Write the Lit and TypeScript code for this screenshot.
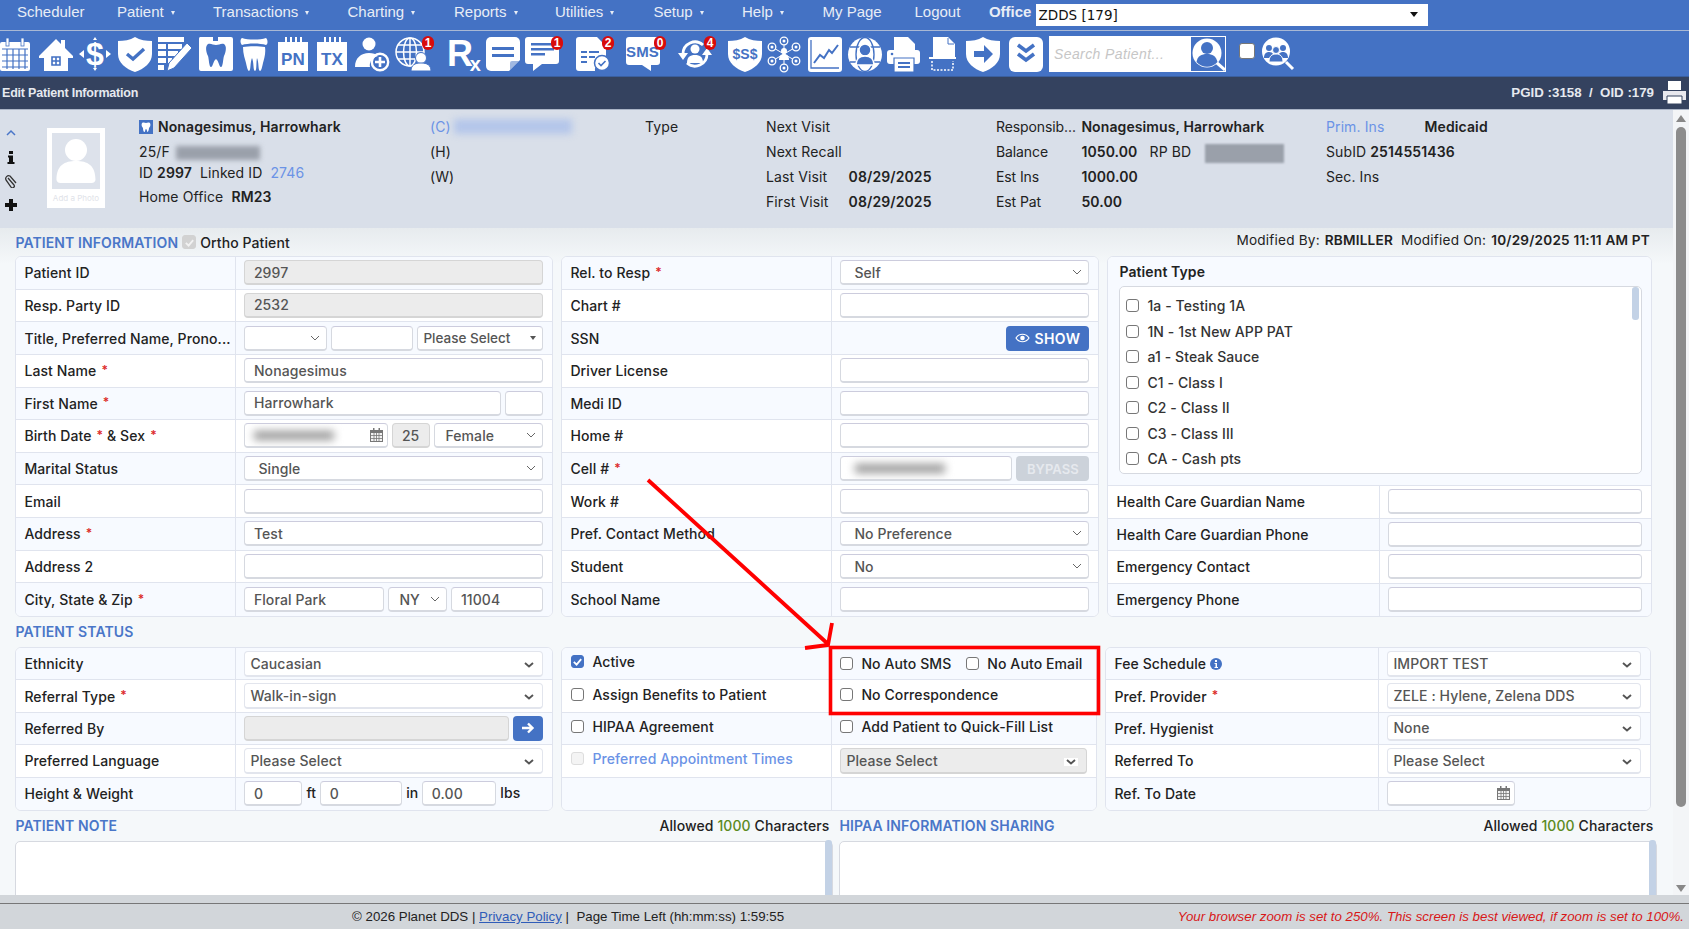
import { LitElement, html, css, svg } from "lit";
import { customElement } from "lit/decorators.js";

const B = "#4472c4";
const icons: Record<string, any> = {
  calendar: svg`<rect x="0" y="5" width="30" height="29" rx="2" fill="#fff"/><rect x="6" y="1" width="3" height="8" fill="#fff" stroke="${B}" stroke-width=".8"/><rect x="21" y="1" width="3" height="8" fill="#fff" stroke="${B}" stroke-width=".8"/><path d="M2 12h26M2 18h26M2 24h26M2 30h26M7 12v20M13 12v20M19 12v20M25 12v20" stroke="${B}" stroke-width="1.2"/>`,
  home: svg`<path d="M0 19 L17 2 L22 7 V3 H26 V11 L34 19 L34 21 H29 V34 H5 V21 H0Z" fill="#fff"/><path d="M13 20h8v8h-8z M17 20v8 M13 24h8" fill="none" stroke="${B}" stroke-width="1.6"/>`,
  dollar: svg`<text x="16" y="28" text-anchor="middle" font-family="Liberation Sans" font-weight="700" font-size="32" fill="#fff">$</text><path d="M0 17l5-4v8zM32 17l-5-4v8zM16 0l-2 3h4zM16 34l-2-3h4z" fill="#fff"/>`,
  shield: svg`<path d="M17 0C22 3 28 4 34 4V17C34 26 26 32 17 35C8 32 0 26 0 17V4C6 4 12 3 17 0Z" fill="#fff"/><path d="M9 17l6 5 11-10" fill="none" stroke="${B}" stroke-width="3.4"/>`,
  edit: svg`<path d="M0 0h26v5H0zM0 7h8v5H0zM10 7h14v5H10zM0 14h8v5H0zM10 14h10v5H10zM0 21h8v5H0zM10 21h4v5h-4zM0 28h6v5H0z" fill="#fff"/><path d="M29 6l5 5-18 20-7 3 2-8z" fill="#fff" stroke="${B}" stroke-width="1"/>`,
  toothbox: svg`<path d="M1 0h13v4h5V0h13a2 2 0 012 2v30a2 2 0 01-2 2H2a2 2 0 01-2-2V2a2 2 0 011-2z" fill="#fff"/><path d="M9 7c3-1 5 1 8 1s5-2 8-1c3 2 2 8 0 12-1 3-1 11-3 11s-2-6-5-8c-3 2-3 8-5 8s-2-8-3-11c-2-4-3-10 0-12z" fill="${B}"/>`,
  teeth: svg`<path d="M1 1c6 2 18 2 24 0 2 2 2 6 0 7-6-2-18-2-24 0-2-2-2-6 0-7z" fill="#fff"/><path d="M2 10c6-1 16-1 22 0 1 7-1 12-2 16-1 5-2 8-3 8-2 0-1-9-3-13-1 4 0 13-2 13s-1-9-3-13c-2 4-1 13-3 13-1 0-2-3-3-8-1-4-3-9-3-16z" fill="#fff"/>`,
  pn: svg`<path d="M0 5h7V0h2v5h3V0h2v5h3V0h2v5h3V0h2v5h6v29H0z" fill="#fff"/><text x="15" y="28" text-anchor="middle" font-family="Liberation Sans" font-weight="700" font-size="17" fill="${B}">PN</text>`,
  tx: svg`<path d="M0 5h7V0h2v5h3V0h2v5h3V0h2v5h3V0h2v5h6v29H0z" fill="#fff"/><text x="15" y="28" text-anchor="middle" font-family="Liberation Sans" font-weight="700" font-size="17" fill="${B}">TX</text>`,
  adduser: svg`<circle cx="14" cy="7" r="6.5" fill="#fff"/><path d="M0 30c0-9 6-14 14-14 4 0 7 1 9 3-6 2-9 6-8 11z" fill="#fff"/><circle cx="25" cy="25" r="8.2" fill="none" stroke="#fff" stroke-width="2.4"/><path d="M25 20v10M20 25h10" stroke="#fff" stroke-width="2.6"/>`,
  globeuser: svg`<g fill="none" stroke="#fff" stroke-width="1.5"><circle cx="15" cy="15" r="14"/><ellipse cx="15" cy="15" rx="6.5" ry="14"/><path d="M1 15h28M3 8h24M3 22h24M15 1v28"/></g><circle cx="26" cy="21" r="5.5" fill="#fff" stroke="${B}"/><path d="M16 34c0-6 4-8 10-8s10 2 10 8z" fill="#fff" stroke="${B}"/>`,
  rx: svg`<text x="0" y="29" font-family="Liberation Sans" font-weight="700" font-size="36" fill="#fff" textLength="34" lengthAdjust="spacing">R<tspan dy="5" font-size="20">x</tspan></text>`,
  note: svg`<path d="M5 0h24a5 5 0 015 5v18L23 34H5a5 5 0 01-5-5V5a5 5 0 015-5z" fill="#fff"/><path d="M6 10h22v3H6zM6 17h22v3H6z" fill="${B}"/><path d="M24 33V26a2 2 0 012-2h7z" fill="${B}" opacity=".5"/>`,
  chat: svg`<path d="M3 0h28a3 3 0 013 3v21a3 3 0 01-3 3H17L8 34v-7H3a3 3 0 01-3-3V3a3 3 0 013-3z" fill="#fff"/><path d="M6 6h23v2.5H6zM6 11h23v2.5H6zM6 16h14v2.5H6z" fill="${B}"/>`,
  list: svg`<path d="M3 0h18l9 9v12a12 12 0 00-11 13H3a3 3 0 01-3-3V3a3 3 0 013-3z" fill="#fff"/><path d="M5 14h6v2H5zM13 14h10v2H13zM5 19h6v2H5zM13 19h6v2h-6zM5 24h6v2H5z" fill="${B}"/><circle cx="26" cy="26" r="7.5" fill="#fff" stroke="${B}" stroke-width="1.5"/><path d="M22.5 26l2.5 2.5 4.5-4.5" stroke="${B}" stroke-width="1.6" fill="none"/>`,
  sms: svg`<path d="M3 0h28a3 3 0 013 3v22a3 3 0 01-3 3h-6v6l-9-6H3a3 3 0 01-3-3V3a3 3 0 013-3z" fill="#fff"/><text x="16.5" y="20" text-anchor="middle" font-family="Liberation Sans" font-weight="700" font-size="15" fill="${B}">SMS</text>`,
  refresh: svg`<path d="M5 17a12 12 0 0120-9" fill="none" stroke="#fff" stroke-width="2.8"/><path d="M29 17a12 12 0 01-20 9" fill="none" stroke="#fff" stroke-width="2.8"/><path d="M0 16h10l-5 7zM24 18h10l-5-7z" fill="#fff"/><circle cx="17" cy="12" r="4.5" fill="#fff"/><path d="M9 26c0-6 3-8 8-8s8 2 8 8z" fill="#fff"/>`,
  shieldmoney: svg`<path d="M17 0C22 3 28 4 34 4V17C34 26 26 32 17 35C8 32 0 26 0 17V4C6 4 12 3 17 0Z" fill="#fff"/><text x="17" y="22" text-anchor="middle" font-family="Liberation Sans" font-weight="700" font-size="14" fill="${B}">$S$</text>`,
  network: svg`<g stroke="#fff" stroke-width="1" fill="none"><path d="M16 17L16 4M16 17L16 31M16 17L4 10M16 17L28 10M16 17L4 24M16 17L28 24"/></g><g fill="${B}" stroke="#fff" stroke-width="1.3"><circle cx="16" cy="4" r="3.8"/><circle cx="4" cy="10" r="3.8"/><circle cx="28" cy="10" r="3.8"/><circle cx="4" cy="24" r="3.8"/><circle cx="28" cy="24" r="3.8"/><circle cx="16" cy="31" r="3.8"/></g><circle cx="16" cy="14" r="3" fill="#fff"/><path d="M11 23c0-4 2-6 5-6s5 2 5 6z" fill="#fff"/><g fill="#fff"><circle cx="16" cy="4" r="1.5"/><circle cx="4" cy="10" r="1.5"/><circle cx="28" cy="10" r="1.5"/><circle cx="4" cy="24" r="1.5"/><circle cx="28" cy="24" r="1.5"/><circle cx="16" cy="31" r="1.5"/></g>`,
  chart: svg`<rect width="34" height="35" rx="3" fill="#fff"/><path d="M3 3v28h28" fill="none" stroke="${B}" stroke-width="1.3"/><path d="M6 26l6-8 4 3 5-8 3 3 6-8" fill="none" stroke="${B}" stroke-width="2"/>`,
  globeperson: svg`<circle cx="17" cy="17.5" r="17" fill="#fff"/><g fill="none" stroke="${B}" stroke-width="1.4"><path d="M2 10h30M2 25h30"/><ellipse cx="17" cy="17.5" rx="9" ry="17"/></g><circle cx="17" cy="13" r="6" fill="${B}" stroke="#fff" stroke-width="1.5"/><path d="M8 28c0-6 4-9 9-9s9 3 9 9z" fill="${B}" stroke="#fff" stroke-width="1.5"/>`,
  printer: svg`<path d="M7 0h14l7 7v6H7z" fill="#fff"/><rect x="0" y="13" width="33" height="14" rx="3" fill="#fff"/><path d="M7 21h20v14H7z" fill="#fff" stroke="${B}" stroke-width="1.2"/><path d="M11 25h12v2H11zM11 29h12v2H11z" fill="${B}"/><circle cx="5" cy="17" r="1.3" fill="${B}"/>`,
  docscan: svg`<path d="M4 0h15l7 7v13H4z" fill="#fff"/><path d="M0 20h27v2H0z" fill="#fff"/><path d="M3 24v9h21v-9" fill="none" stroke="#fff" stroke-width="1.5" stroke-dasharray="2 1.5"/><path d="M19 1v6h6" fill="none" stroke="${B}"/>`,
  shieldarrow: svg`<path d="M17 0C22 3 28 4 34 4V17C34 26 26 32 17 35C8 32 0 26 0 17V4C6 4 12 3 17 0Z" fill="#fff"/><path d="M8 14h10V8l9 9-9 9v-6H8z" fill="${B}"/>`,
  chevrons: svg`<rect width="34" height="35" rx="6" fill="#fff"/><path d="M9 8l8 6 8-6M9 17l8 6 8-6" fill="none" stroke="${B}" stroke-width="3.6"/>`,
};

const tools: [string, number, string?][] = [
  ["calendar", 39], ["home", 40], ["dollar", 39], ["shield", 40], ["edit", 41], ["toothbox", 42], ["teeth", 37],
  ["pn", 39], ["tx", 38], ["adduser", 40], ["globeuser", 52, "1"], ["rx", 39], ["note", 39], ["chat", 51, "1"],
  ["list", 50, "2"], ["sms", 52, "0"], ["refresh", 50, "4"], ["shieldmoney", 40], ["network", 39.5],
  ["chart", 40], ["globeperson", 39.5], ["printer", 42], ["docscan", 37], ["shieldarrow", 42.5], ["chevrons", 39.5],
];

const menu: [string, number, boolean][] = [
  ["Scheduler", 100, false], ["Patient", 96, true], ["Transactions", 134.5, true], ["Charting", 106.5, true],
  ["Reports", 101, true], ["Utilities", 98.5, true], ["Setup", 88.5, true], ["Help", 80.5, true],
  ["My Page", 92, false], ["Logout", 74.4, false],
];

const chev = (bold = false) => bold
  ? html`<svg class="chev" viewBox="0 0 10 6" width="10" height="6"><path d="M1 1l4 3.5L9 1" fill="none" stroke="#555" stroke-width="1.9"/></svg>`
  : html`<svg class="chev" viewBox="0 0 10 6" width="10" height="6"><path d="M1 1l4 4 4-4" fill="none" stroke="#666" stroke-width="1"/></svg>`;

const calIcon = html`<svg class="cal" viewBox="0 0 13 14" width="13" height="14"><path d="M0 2h13v12H0z" fill="#777"/><path d="M3 0h1.5v3H3zM8.5 0H10v3H8.5z" fill="#777"/><path d="M1 5h11v8H1z" fill="#f3f3f3"/><path d="M1 7.5h11M1 10.5h11M4 5v8M6.5 5v8M9 5v8" stroke="#777" stroke-width=".8"/></svg>`;

const inp = (v = "", cls = "") => html`<div class="f ${cls}">${v}</div>`;
const sel = (v: string, cls = "") => html`<div class="f sel ${cls}"><span>${v}</span>${chev()}</div>`;
const bsel = (v: string, cls = "") => html`<div class="f sel bs ${cls}"><span>${v}</span>${chev(true)}</div>`;
const req = html`<i class="req">*</i>`;
const row = (label: any, ctl: any) => html`<div class="row"><div class="lab">${label}</div><div class="ctl">${ctl}</div></div>`;
const cb = (on = false, dis = false) => html`<span class="cb ${on ? "on" : ""} ${dis ? "dis" : ""}">${on ? html`<svg viewBox="0 0 12 12" width="11" height="11"><path d="M2 6.5l3 3 5-6" fill="none" stroke="#fff" stroke-width="2"/></svg>` : ""}</span>`;
const chk = (t: string, on = false, dis = false, cls = "") => html`<label class="chk ${cls}">${cb(on, dis)}<span>${t}</span></label>`;

const ptypes = ["1a - Testing 1A", "1N - 1st New APP PAT", "a1 - Steak Sauce", "C1 - Class I", "C2 - Class II", "C3 - Class III", "CA - Cash pts"];

@customElement("app-root")
export class AppRoot extends LitElement {
  static styles = css`
    :host { display: block; height: 100vh; overflow: hidden; position: relative; font-family: Inter, "Liberation Sans", sans-serif; font-size: 14px; color: #222; letter-spacing: .1px; }
    * { box-sizing: border-box; }
    .app { display: flex; flex-direction: column; height: 929px; }
    .menu { height: 31px; background: #4472c4; border-bottom: 1px solid #a9b8d4; display: flex; align-items: center; padding: 0 0 7px 17px; font-family: "Liberation Sans", sans-serif; font-size: 15px; letter-spacing: 0; color: #e8edf6; flex: none; }
    .mi { display: flex; align-items: center; gap: 7px; flex: none; }
    .mi b { font-weight: 400; }
    .tri { width: 0; height: 0; border-left: 2.5px solid transparent; border-right: 2.5px solid transparent; border-top: 4px solid #e8edf6; margin-top: 2px; }
    .office { font-weight: 700; width: 46.7px; }
    .osel { width: 392px; height: 22px; background: #fff; color: #111; font-family: "DejaVu Sans", sans-serif; font-size: 13.5px; display: flex; align-items: center; justify-content: space-between; padding: 0 3px; margin-top: 6px; }
    .osel i { width: 0; height: 0; border-left: 4.5px solid transparent; border-right: 4.5px solid transparent; border-top: 5px solid #111; margin-right: 7px; }
    .tools { height: 46px; flex: none; background: #4472c4; border-bottom: 1px solid #3a5f9f; display: flex; align-items: center; }
    .slot { position: relative; height: 36px; display: flex; align-items: center; flex: none; }
    .slot svg.ic { height: 34px; width: 36px; overflow: visible; display: block; }
    .badge { position: absolute; top: 0; background: #d80b0b; color: #fff; font: 700 12px "Liberation Sans", sans-serif; border-radius: 6px; width: 12px; height: 14px; display: flex; align-items: center; justify-content: center; letter-spacing: 0; }
    .search { width: 176.5px; height: 36px; background: #fff; display: flex; align-items: center; justify-content: space-between; font: italic 14px "Liberation Sans", sans-serif; color: #c6c6c6; padding: 1px 1px 1px 5px; margin-left: 1px; letter-spacing: .4px; }
    .search .sq { width: 34px; height: 34px; background: #4472c4; border: 0; }
    .tcb { width: 16px; height: 16px; background: #fff; border: 1.5px solid #777; border-radius: 3px; margin: 0 6px 6px 13px; flex: none; }
    .band { height: 32px; flex: none; background: #34425f; border-bottom: 1px solid #34425f; color: #e6e9ef; font: 700 12.5px "Liberation Sans", sans-serif; letter-spacing: -.2px; display: flex; align-items: center; justify-content: space-between; padding-left: 2px; }
    .band .r { display: flex; align-items: center; font-size: 13.3px; gap: 8px; padding-right: 2px; letter-spacing: 0; }
    .mid { flex: 1; min-height: 0; display: flex; border-top: 1px solid #aab4c6; overflow: hidden; background: #f5f8fa; }
    .content { width: 1673px; flex: none; overflow: hidden; }
    .sb { flex: 1; background: #f3f5f7; display: flex; flex-direction: column; align-items: center; padding: 5px 0 3px; }
    .sb .thumb { flex: 1; width: 10px; background: #8c8c8c; border-radius: 5px; margin: 5px 0 0; max-height: 680px; }
    .ua { width: 0; height: 0; border-left: 5px solid transparent; border-right: 5px solid transparent; border-bottom: 7px solid #888; }
    .da { width: 0; height: 0; border-left: 5px solid transparent; border-right: 5px solid transparent; border-top: 7px solid #888; margin-top: auto; }
    .hdr { height: 118px; background: #d9dfe9; display: flex; }
    .side { width: 47px; flex: none; display: flex; flex-direction: column; align-items: center; padding: 16px 25px 0 0; gap: 10px; height: 100%; font-size: 14px; }
    .side svg { display: block; height: 14px; }
    .photo { width: 58px; height: 80px; margin-top: 18px; background: #fff; flex: none; padding: 5px 5px 0; margin-right: 34px; font-size: 8px; color: #dfe3e9; text-align: center; letter-spacing: 0; }
    .photo .pic { height: 56px; background: #dde2eb; margin-bottom: 4px; overflow: hidden; }
    .photo svg { display: block; width: 100%; height: 100%; }
    .cA { width: 291px; padding-top: 4px; flex: none; }
    .cA .l { height: 25px; display: flex; align-items: center; gap: 5px; white-space: nowrap; }
    .cA .l.a { height: 16px; gap: 0; }
    .cA .l.c { margin-top: 4px; gap: 0; }
    .tooth { width: 14px; height: 14px; background: #4472c4; display: block; }
    .col { padding-top: 4px; flex: none; }
    .col .l { height: 25px; display: flex; align-items: center; white-space: nowrap; }
    .cB { width: 215px; } .cC { width: 121px; } .cD { width: 230px; } .cE { width: 330px; } .cF { flex: 1; }
    .cD .k { width: 82.6px; } .cE .k { width: 85.4px; letter-spacing: -.1px; } .cF .k { width: 98.6px; }
    b { font-weight: 600; }
    .link { color: #6b93e6; }
    .blur { display: inline-block; filter: blur(2.5px); background: #9aa0aa; }
    .bl1 { width: 84px; height: 14px; margin-left: 1px; margin-top: 2px; }
    .bl2 { width: 79px; height: 19px; margin-left: 14px; margin-top: 3px; filter: blur(1px); }
    .bl3 { width: 118px; height: 15px; background: #b4c6ea; margin-left: 3px; filter: blur(3.5px); }
    .form { padding: 0 0 0 15.4px; background: linear-gradient(#e7ebee, #f5f8fa 36px); }
    .head { display: flex; align-items: center; justify-content: space-between; height: 28px; padding-right: 20px; }
    .head > div { display: flex; align-items: center; gap: 4px; }
    .head.sh { height: 30px; padding-bottom: 1px; }
    .h { color: #4a76c8; font-weight: 600; font-size: 14px; white-space: nowrap; letter-spacing: .1px; }
    .mod { margin-bottom: 5px; gap: 5px !important; font-size: 13.6px; letter-spacing: .2px; }
    .mod b { margin-right: 3px; font-weight: 600; }
    .cols { display: grid; column-gap: 8px; }
    .cols.t { grid-template-columns: 538px 538px 545px; }
    .cols.s { grid-template-columns: 538px 536px 546px; }
    .tbl { border: 1px solid #e0e4ee; border-radius: 6px; overflow: hidden; display: grid; grid-auto-rows: 1fr; --lab: 220px; background: #fff; }
    .tbl.m { --lab: 270px; }
    .tbl.r { --lab: 272px; }
    .tbl.rs { --lab: 273px; }
    .tbl.pt { grid-template-rows: 229px repeat(4, 1fr); }
    .h11 { height: 361px; } .h5 { height: 164px; }
    .row { display: grid; grid-template-columns: var(--lab) 1fr; border-bottom: 1px solid #e0e4ee; min-height: 0; background: #fff; }
    .row:nth-child(odd) { background: #f7faff; }
    .row:last-child { border-bottom: 0; }
    .lab { display: flex; align-items: center; padding-left: 8px; font-weight: 500; border-right: 1px solid #e0e4ee; white-space: nowrap; overflow: hidden; color: #222; min-width: 0; }
    .ctl { display: flex; align-items: center; padding: 0 9px 0 8px; min-width: 0; }
    .req { color: #dc2a2a; font-style: normal; font-size: 12px; margin: -3px 0 0 5px; font-weight: 600; }
    .f { flex: 1; min-width: 0; height: 25px; background: #fff; border: 1px solid #d6d9e0; border-top-color: #ccd; border-bottom: 2px solid #d6d9e0; border-radius: 4px; display: flex; align-items: center; padding-left: 8.5px; color: #555; font-weight: 500; white-space: nowrap; overflow: hidden; }
    .f.dis { background: #ececec; border-color: #d5d5d5; }
    .sel { justify-content: space-between; padding-right: 6px; padding-left: 13px; }
    .sel.tight { padding-left: 5px; }
    .bs { padding-left: 5px; padding-right: 8px; height: 26px; border-color: #e2e5ed; }
    .chev { flex: none; }
    .bs .chev { margin-top: 3px; }
    .bs.dis .chev { background: #fff; padding: 0 2px; width: 14px; height: 8px; }
    .cal { flex: none; margin-left: auto; margin-right: 4px; }
    .rd { flex: none; width: 128px; }
    .g { display: grid; gap: 4px; flex: 1; min-width: 0; }
    .g1 { grid-template-columns: 83px 82px 1fr; }
    .g2 { grid-template-columns: 1fr 38px; }
    .g3 { grid-template-columns: 144px 38px 1fr; }
    .g4 { grid-template-columns: 140px 59px 1fr; }
    .g5 { grid-template-columns: 1fr 30px; }
    .g6 { grid-template-columns: 1fr 73px; }
    .ps { padding-left: 5px; justify-content: space-between; padding-right: 6px; letter-spacing: 0; font-size: 13.5px; }
    .tri2 { width: 0; height: 0; border-left: 3.5px solid transparent; border-right: 3.5px solid transparent; border-top: 4px solid #555; flex: none; }
    .fem { padding-left: 10px; }
    .btn { background: #4472c4; color: #fff; border-radius: 4px; height: 25px; display: flex; align-items: center; justify-content: center; font-weight: 600; }
    .show { margin-left: auto; width: 83px; gap: 4px; letter-spacing: .4px; }
    .byp { background: #ccd2da; color: #e6e9ee; font-weight: 600; font-size: 13px; }
    .bf { height: 9px; width: 80px; background: #999; filter: blur(4px); display: block; flex: none; }
    .bfb { height: 9px; width: 90px; margin-left: 5px; }
    .hw { display: flex; align-items: center; flex: 1; font-weight: 500; }
    .hw .f { flex: none; }
    .w58 { width: 58px; } .w82 { width: 82px; } .w74 { width: 74px; }
    .hw span { margin: -3px 4px 0; }
    .ptype { border-bottom: 1px solid #e0e4ee; background: #f7faff; padding: 5px 9px 0 11px; font-weight: 600; display: flex; flex-direction: column; gap: 6px; min-height: 0; }
    .ptype .t { height: 18px; display: flex; align-items: center; }
    .plist { height: 188px; background: #fff; border: 1px solid #d6d9e0; border-radius: 5px; position: relative; padding: 6px 0 0 6px; font-weight: 500; color: #333; overflow: hidden; }
    .plist .th { position: absolute; top: 0; right: 2px; width: 7.5px; height: 33px; background: #c3d2e6; border-radius: 3px; }
    .pi { height: 25.5px; display: flex; align-items: center; }
    .chk { display: flex; align-items: center; gap: 8px; white-space: nowrap; font-weight: 500; }
    .cb { width: 13px; height: 13px; border: 1.2px solid #777; border-radius: 3px; background: #fff; flex: none; display: flex; align-items: center; justify-content: center; }
    .cb.on { background: #4472c4; border-color: #4472c4; }
    .cb.dis { border-color: #ddd; background: #f4f4f4; }
    .cb.og { background: #d2d2d2; border-color: #d2d2d2; width: 14px; height: 14px; }
    .lchk { padding: 0 0 4px 9px; display: flex; align-items: center; border-right: 1px solid #e0e4ee; }
    .rowp { display: grid; grid-template-columns: 270px 1fr; border-bottom: 1px solid #e0e4ee; background: #fff; min-height: 0; }
    .rowp:nth-child(odd) { background: #f7faff; }
    .rowp:last-child { border-bottom: 0; }
    .rchk { display: flex; align-items: center; padding: 0 9px 0 8px; gap: 15px; }
    .rowp:nth-child(2) .rchk, .rowp:nth-child(3) .rchk { padding-bottom: 4px; }
    .ortho { color: #222; font-weight: 500; }
    .note-h { display: grid; grid-template-columns: 818px 818px; column-gap: 6px; height: 30px; align-items: center; padding-bottom: 2px; }
    .note-h > div { display: flex; justify-content: space-between; font-weight: 500; padding-right: 4px; }
    .note-h .g1000 { color: #5c8a1e; }
    .areas { display: grid; grid-template-columns: 818px 818px; column-gap: 6px; }
    .ta { height: 80px; background: #fff; border: 1px solid #d6d9e0; border-radius: 5px 5px 0 0; position: relative; }
    .ta i { position: absolute; right: 0; top: -2px; width: 7px; height: 90px; background: #c3d2e6; border-radius: 3px; }
    .foot { flex: none; height: 34px; background: #d2d6da; font: 13.3px "Liberation Sans", sans-serif; letter-spacing: 0; display: flex; flex-direction: column; }
    .foot .gap { height: 8px; flex: none; border-bottom: 1px solid #777; box-sizing: content-box; }
    .foot .txt { flex: 1; display: flex; align-items: center; justify-content: space-between; padding: 0 5px 0 352px; color: #222; }
    .foot a { color: #2f5cb8; text-decoration: underline; }
    .foot em { color: #d81818; font-size: 13.3px; }
    .annot { position: absolute; inset: 0; pointer-events: none; width: 1689px; height: 929px; }
  `;

  render() {
    return html`<div class="app">
      <div class="menu">
        ${menu.map(([t, w, a]) => html`<div class="mi" style="width:${w}px"><b>${t}</b>${a ? html`<i class="tri"></i>` : ""}</div>`)}
        <div class="office">Office</div>
        <div class="osel"><span>ZDDS [179]</span><i></i></div>
      </div>
      <div class="tools">
        ${tools.map(([k, w, b]) => html`<div class="slot" style="width:${w}px"><svg class="ic" viewBox="0 0 36 34">${icons[k]}</svg>${b ? html`<span class="badge" style="left:${w - (k === "chat" || k === "globeuser" ? 25 : 24)}px">${b}</span>` : ""}</div>`)}
        <div class="search"><span>Search Patient...</span>
          <svg class="sq" viewBox="0 0 34 34"><circle cx="16" cy="16" r="14.5" fill="#fff"/><circle cx="16" cy="11" r="6" fill="#4472c4"/><path d="M5.5 25c1-6 5-8 10.500-8s9 2 10.500 8a14 14 0 01-21 0z" fill="#4472c4"/><path d="M26 26l8 7" stroke="#fff" stroke-width="3"/></svg>
        </div>
        <span class="tcb"></span>
        <svg width="34" height="36" viewBox="0 0 34 36"><circle cx="15" cy="15.5" r="13" fill="#fff" stroke="#fff" stroke-width="2"/><g fill="#4472c4"><circle cx="8" cy="12" r="3"/><circle cx="22" cy="12" r="3"/><path d="M3 22c0-4 2-6 5-6s5 2 5 6zM17 22c0-4 2-6 5-6s5 2 5 6z"/><circle cx="15" cy="14" r="3.5" stroke="#fff"/><path d="M8 26c0-6 3-8 7-8s7 2 7 8z" stroke="#fff"/></g><path d="M25 26l7 7" stroke="#fff" stroke-width="3"/></svg>
      </div>
      <div class="band"><span>Edit Patient Information</span>
        <div class="r"><span>PGID :3158&nbsp; /&nbsp; OID :179</span>
          <svg width="25" height="25" viewBox="0 0 25 25"><path d="M6 1h13v9H6z" fill="#fff"/><path d="M1 11h23v9H1z" fill="#e8e8ee"/><path d="M5 16h15v8H5z" fill="#fff" stroke="#34425f"/></svg>
        </div>
      </div>
      <div class="mid">
        <div class="content">
          ${this.header()}
          ${this.form()}
        </div>
        <div class="sb"><i class="ua"></i><i class="thumb"></i><i class="da"></i></div>
      </div>
      <div class="foot"><div class="gap"></div><div class="txt"><span>© 2026 Planet DDS | <a>Privacy Policy</a> |&nbsp; Page Time Left (hh:mm:ss) 1:59:55</span><em>Your browser zoom is set to 250%. This screen is best viewed, if zoom is set to 100%.</em></div></div>
    </div>
    <svg class="annot" viewBox="0 0 1689 929">
      <rect x="830.5" y="647.5" width="268" height="66" fill="none" stroke="#f00" stroke-width="3.6"/>
      <path d="M648 480L828 644M832 623L828 645L805 648" fill="none" stroke="#f00" stroke-width="3.8"/>
    </svg>`;
  }

  header() {
    return html`<div class="hdr">
      <div class="side">
        <svg viewBox="0 0 10 10" width="10"><path d="M1 7l4-4 4 4" fill="none" stroke="#4a76c8" stroke-width="1.5"/></svg>
        <svg viewBox="0 0 14 14" width="14"><path d="M5 1h4v3H5zM4 5.500h5V12h1.500v2h-7v-2H5V7.500H4z" fill="#111"/></svg>
        <svg viewBox="0 0 14 14" width="14"><path d="M4 4l6 7a1.800 1.800 0 01-3 2L2 6a3 3 0 014-4l6 7" fill="none" stroke="#333" stroke-width="1.3"/></svg>
        <svg viewBox="0 0 14 14" width="14"><path d="M5 1h4v4h4v4H9v4H5V9H1V5h4z" fill="#111"/></svg>
      </div>
      <div class="photo"><div class="pic"><svg viewBox="0 0 47 56"><circle cx="23.5" cy="17" r="11" fill="#fff"/><path d="M4 47c0-15 8-19 19.500-19S43 32 43 47a4 4 0 01-4 3H8a4 4 0 01-4-3z" fill="#fff"/></svg></div>Add a Photo</div>
      <div class="cA">
        <div class="l"><svg class="tooth" viewBox="0 0 14 14"><rect width="14" height="14" fill="#4472c4"/><path d="M3 3c2-1 3 0 4 0s2-1 4 0c1 2 0 4-1 5 0 2-1 4-1.500 4S8 9 7 9 6.500 12 5.500 12 4 10 4 8C3 7 2 5 3 3z" fill="#fff"/></svg><b>Nonagesimus, Harrowhark</b></div>
        <div class="l">25/F <i class="blur bl1"></i></div>
        <div class="l a">ID&nbsp;<b>2997</b>&nbsp;&nbsp;Linked ID&nbsp;&nbsp;<span class="link">2746</span></div>
        <div class="l c">Home Office&nbsp;&nbsp;<b>RM23</b></div>
      </div>
      <div class="col cB">
        <div class="l"><span class="link">(C)</span><i class="blur bl3"></i></div><div class="l">(H)</div><div class="l">(W)</div>
      </div>
      <div class="col cC"><div class="l">Type</div></div>
      <div class="col cD">
        <div class="l"><span class="k">Next Visit</span></div><div class="l"><span class="k">Next Recall</span></div>
        <div class="l"><span class="k">Last Visit</span><b>08/29/2025</b></div><div class="l"><span class="k">First Visit</span><b>08/29/2025</b></div>
      </div>
      <div class="col cE">
        <div class="l"><span class="k">Responsib...</span><b>Nonagesimus, Harrowhark</b></div>
        <div class="l"><span class="k">Balance</span><b>1050.00</b><span>&nbsp;&nbsp;&nbsp;RP BD</span><i class="blur bl2"></i></div>
        <div class="l"><span class="k">Est Ins</span><b>1000.00</b></div>
        <div class="l"><span class="k">Est Pat</span><b>50.00</b></div>
      </div>
      <div class="col cF">
        <div class="l"><span class="k link">Prim. Ins</span><b>Medicaid</b></div>
        <div class="l">SubID&nbsp;<b>2514551436</b></div>
        <div class="l">Sec. Ins</div>
      </div>
    </div>`;
  }

  form() {
    return html`<div class="form">
      <div class="head">
        <div><span class="h">PATIENT INFORMATION</span><span class="cb og"><svg viewBox="0 0 12 12" width="11" height="11"><path d="M2 6.500l3 3 5-6" fill="none" stroke="#f2f2f2" stroke-width="2"/></svg></span><span class="ortho">Ortho Patient</span></div>
        <div class="mod"><span>Modified By:</span><b>RBMILLER</b><span>Modified On:</span><b>10/29/2025 11:11 AM PT</b></div>
      </div>
      <div class="cols t">
        <div class="tbl h11">
          ${row("Patient ID", inp("2997", "dis"))}
          ${row("Resp. Party ID", inp("2532", "dis"))}
          ${row("Title, Preferred Name, Prono...", html`<div class="g g1"><div class="f sel tight"><span></span>${chev()}</div>${inp()}<div class="f ps"><span>Please Select</span><i class="tri2"></i></div></div>`)}
          ${row(html`Last Name${req}`, inp("Nonagesimus"))}
          ${row(html`First Name${req}`, html`<div class="g g2">${inp("Harrowhark")}${inp()}</div>`)}
          ${row(html`Birth Date${req}&nbsp;&amp; Sex${req}`, html`<div class="g g3"><div class="f"><i class="bf"></i>${calIcon}</div>${inp("25", "dis")}${sel("Female", "fem")}</div>`)}
          ${row("Marital Status", sel("Single"))}
          ${row("Email", inp())}
          ${row(html`Address${req}`, inp("Test"))}
          ${row("Address 2", inp())}
          ${row(html`City, State &amp; Zip${req}`, html`<div class="g g4">${inp("Floral Park")}${sel("NY", "fem")}${inp("11004")}</div>`)}
        </div>
        <div class="tbl m h11">
          ${row(html`Rel. to Resp${req}`, sel("Self"))}
          ${row("Chart #", inp())}
          ${row("SSN", html`<div class="btn show"><svg width="15" height="10" viewBox="0 0 15 10"><path d="M1 5c3-5 10-5 13 0-3 5-10 5-13 0z" fill="none" stroke="#fff" stroke-width="1.2"/><circle cx="7.5" cy="5" r="2.3" fill="#fff"/></svg>SHOW</div>`)}
          ${row("Driver License", inp())}
          ${row("Medi ID", inp())}
          ${row("Home #", inp())}
          ${row(html`Cell #${req}`, html`<div class="g g6"><div class="f"><i class="bf bfb"></i></div><div class="btn byp">BYPASS</div></div>`)}
          ${row("Work #", inp())}
          ${row("Pref. Contact Method", sel("No Preference"))}
          ${row("Student", sel("No"))}
          ${row("School Name", inp())}
        </div>
        <div class="tbl r h11 pt">
          <div class="ptype"><div class="t">Patient Type</div>
            <div class="plist"><i class="th"></i>${ptypes.map(p => html`<div class="pi">${chk(p)}</div>`)}</div>
          </div>
          ${row("Health Care Guardian Name", inp())}
          ${row("Health Care Guardian Phone", inp())}
          ${row("Emergency Contact", inp())}
          ${row("Emergency Phone", inp())}
        </div>
      </div>
      <div class="head sh"><span class="h">PATIENT STATUS</span></div>
      <div class="cols s">
        <div class="tbl h5">
          ${row("Ethnicity", bsel("Caucasian"))}
          ${row(html`Referral Type${req}`, bsel("Walk-in-sign"))}
          ${row("Referred By", html`<div class="g g5">${inp("", "dis")}<div class="btn"><svg width="14" height="12" viewBox="0 0 14 12"><path d="M1 6h10M7 1.500L11.500 6 7 10.500" fill="none" stroke="#fff" stroke-width="2.4"/></svg></div></div>`)}
          ${row("Preferred Language", bsel("Please Select"))}
          ${row("Height & Weight", html`<div class="hw">${inp("0", "w58")}<span>ft</span>${inp("0", "w82")}<span>in</span>${inp("0.00", "w74")}<span>lbs</span></div>`)}
        </div>
        <div class="tbl h5">
          <div class="rowp"><div class="lchk">${chk("Active", true)}</div><div class="rchk">${chk("No Auto SMS")}${chk("No Auto Email")}</div></div>
          <div class="rowp"><div class="lchk">${chk("Assign Benefits to Patient")}</div><div class="rchk">${chk("No Correspondence")}</div></div>
          <div class="rowp"><div class="lchk">${chk("HIPAA Agreement")}</div><div class="rchk">${chk("Add Patient to Quick-Fill List")}</div></div>
          <div class="rowp"><div class="lchk"><label class="chk">${cb(false, true)}<span class="link">Preferred Appointment Times</span></label></div><div class="rchk">${bsel("Please Select", "dis")}</div></div>
          <div class="rowp"><div class="lchk"></div><div class="rchk"></div></div>
        </div>
        <div class="tbl rs h5">
          ${row(html`Fee Schedule&nbsp;<svg width="12" height="12" viewBox="0 0 12 12"><circle cx="6" cy="6" r="6" fill="#4472c4"/><path d="M5 2h2v2H5zM4.500 5H7v4h1v1H4.500V9h1V6h-1z" fill="#fff"/></svg>`, bsel("IMPORT TEST"))}
          ${row(html`Pref. Provider${req}`, bsel("ZELE : Hylene, Zelena DDS"))}
          ${row("Pref. Hygienist", bsel("None"))}
          ${row("Referred To", bsel("Please Select"))}
          ${row("Ref. To Date", html`<div class="f rd">${calIcon}</div>`)}
        </div>
      </div>
      <div class="note-h">
        <div><span class="h">PATIENT NOTE</span><span>Allowed <span class="g1000">1000</span> Characters</span></div>
        <div><span class="h">HIPAA INFORMATION SHARING</span><span>Allowed <span class="g1000">1000</span> Characters</span></div>
      </div>
      <div class="areas"><div class="ta"><i></i></div><div class="ta"><i></i></div></div>
    </div>`;
  }
}
